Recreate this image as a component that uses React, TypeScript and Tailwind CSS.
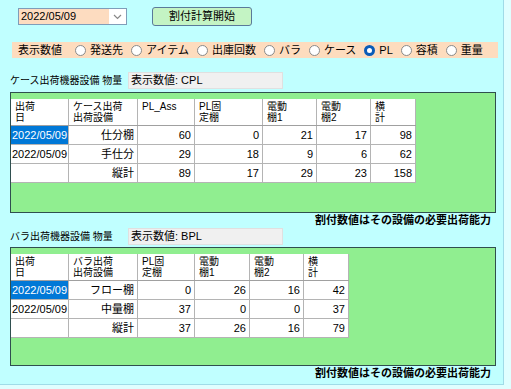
import React from 'react';

const font = "font-['Liberation_Sans','Noto_Sans_CJK_JP',sans-serif]";

type Cell = { t: string; sel?: boolean };

function Radio({ label, on }: { label: string; on?: boolean }) {
  return (
    <div className="flex items-center gap-[4px] whitespace-nowrap">
      {on ? (
        <div className="w-[11px] h-[11px] rounded-full border-[3px] border-[#0a5cb8] bg-white" />
      ) : (
        <div className="w-[11px] h-[11px] rounded-full border border-[#8a8a8a] bg-white" />
      )}
      <span>{label}</span>
    </div>
  );
}

function Grid({
  widths,
  headers,
  rows,
  h,
}: {
  widths: string[];
  headers: string[][];
  rows: Cell[][];
  h: string;
}) {
  return (
    <div className={`ml-[10px] w-[486px] ${h} border border-[#2f4f4f] bg-[#90ee90]`}>
      <div className="inline-flex flex-col bg-white">
        <div className="flex h-[27px] border-b border-[#a0a0a0]">
          {headers.map((hd, i) => (
            <div
              key={i}
              className={`${widths[i]} border-r border-[#b4b4b4] pl-[4px] pt-[2px] text-[10px] leading-[11px] whitespace-nowrap`}
            >
              {hd.map((l, j) => (
                <div key={j}>{l}</div>
              ))}
            </div>
          ))}
        </div>
        {rows.map((r, ri) => (
          <div key={ri} className="flex h-[19px] border-b border-[#b4b4b4]">
            {r.map((c, ci) => (
              <div
                key={ci}
                className={`${widths[ci]} border-r border-[#b4b4b4] text-[11px] leading-[18px] px-[3px] whitespace-nowrap ${
                  ci === 0 ? 'text-left pl-[1px]' : 'text-right'
                } ${c.sel ? 'bg-[#0078d7] text-white' : ''}`}
              >
                {c.t}
              </div>
            ))}
          </div>
        ))}
      </div>
    </div>
  );
}

const cells = (a: string[], sel = false): Cell[] => a.map((t, i) => ({ t, sel: sel && i === 0 }));

export default function App() {
  return (
    <div className={`w-[511px] h-[389px] bg-[#e0ffff] overflow-hidden text-black ${font}`}>
      <div className="w-[504px] h-[385px] bg-[#c0ffff] border-r border-b border-[#a0dce8]">
        {/* top row */}
        <div className="flex items-start pt-[7px] pl-[18px] h-[26px]">
          <div className="mt-[1px] w-[109px] h-[17px] border border-[#7f9db9] bg-white flex">
            <div className="w-[90px] bg-[#fddcc0] text-[11px] pl-[2px] leading-[15px]">2022/05/09</div>
            <div className="flex-1 flex items-center justify-center">
              <svg width="9" height="6" viewBox="0 0 9 6">
                <path d="M1 1 L4.5 4.5 L8 1" fill="none" stroke="#888" strokeWidth="1.2" />
              </svg>
            </div>
          </div>
          <div className="ml-[25px] w-[100px] h-[19px] rounded-[3px] border border-[#5a7a9a] bg-[#c4f4c4] text-[11px] leading-[17px] text-center whitespace-nowrap">
            割付計算開始
          </div>
        </div>

        {/* radio band */}
        <div className="mt-[16px] ml-[12px] w-[486px] h-[16px] bg-[#fddcbe] flex items-center pl-[6px] text-[11px] gap-[8px] whitespace-nowrap">
          <span className="mr-[5px]">表示数値</span>
          <Radio label="発送先" />
          <Radio label="アイテム" />
          <Radio label="出庫回数" />
          <Radio label="バラ" />
          <Radio label="ケース" />
          <Radio label="PL" on />
          <Radio label="容積" />
          <Radio label="重量" />
        </div>

        {/* section 1 */}
        <div className="mt-[14px] flex items-center h-[17px] pl-[10px]">
          <span className="w-[118px] text-[10px] whitespace-nowrap">ケース出荷機器設備 物量</span>
          <div className="w-[155px] h-[17px] bg-[#f0f0f0] border border-[#e0e0e0] text-[11px] leading-[15px] pl-[2px]">
            表示数値: CPL
          </div>
        </div>
        <div className="mt-[3px]">
          <Grid
            h="h-[121px]"
            widths={['w-[58px]', 'w-[69px]', 'w-[57px]', 'w-[68px]', 'w-[54px]', 'w-[54px]', 'w-[45px]']}
            headers={[['出荷', '日'], ['ケース出荷', '出荷設備'], ['PL_Ass'], ['PL固', '定棚'], ['電動', '棚1'], ['電動', '棚2'], ['横', '計']]}
            rows={[
              cells(['2022/05/09', '仕分棚', '60', '0', '21', '17', '98'], true),
              cells(['2022/05/09', '手仕分', '29', '18', '9', '6', '62']),
              cells(['', '縦計', '89', '17', '29', '23', '158']),
            ]}
          />
        </div>
        <div className="h-[14px] pr-[12px] text-right text-[11px] leading-[14px] font-bold">
          割付数値はその設備の必要出荷能力
        </div>

        {/* section 2 */}
        <div className="mt-[1px] flex items-center h-[17px] pl-[10px]">
          <span className="w-[118px] text-[10px] whitespace-nowrap">バラ出荷機器設備 物量</span>
          <div className="w-[155px] h-[17px] bg-[#f0f0f0] border border-[#e0e0e0] text-[11px] leading-[15px] pl-[2px]">
            表示数値: BPL
          </div>
        </div>
        <div className="mt-[2px]">
          <Grid
            h="h-[119px]"
            widths={['w-[58px]', 'w-[69px]', 'w-[57px]', 'w-[55px]', 'w-[54px]', 'w-[45px]']}
            headers={[['出荷', '日'], ['バラ出荷', '出荷設備'], ['PL固', '定棚'], ['電動', '棚1'], ['電動', '棚2'], ['横', '計']]}
            rows={[
              cells(['2022/05/09', 'フロー棚', '0', '26', '16', '42'], true),
              cells(['2022/05/09', '中量棚', '37', '0', '0', '37']),
              cells(['', '縦計', '37', '26', '16', '79']),
            ]}
          />
        </div>
        <div className="h-[14px] pr-[12px] text-right text-[11px] leading-[14px] font-bold">
          割付数値はその設備の必要出荷能力
        </div>
      </div>
    </div>
  );
}
